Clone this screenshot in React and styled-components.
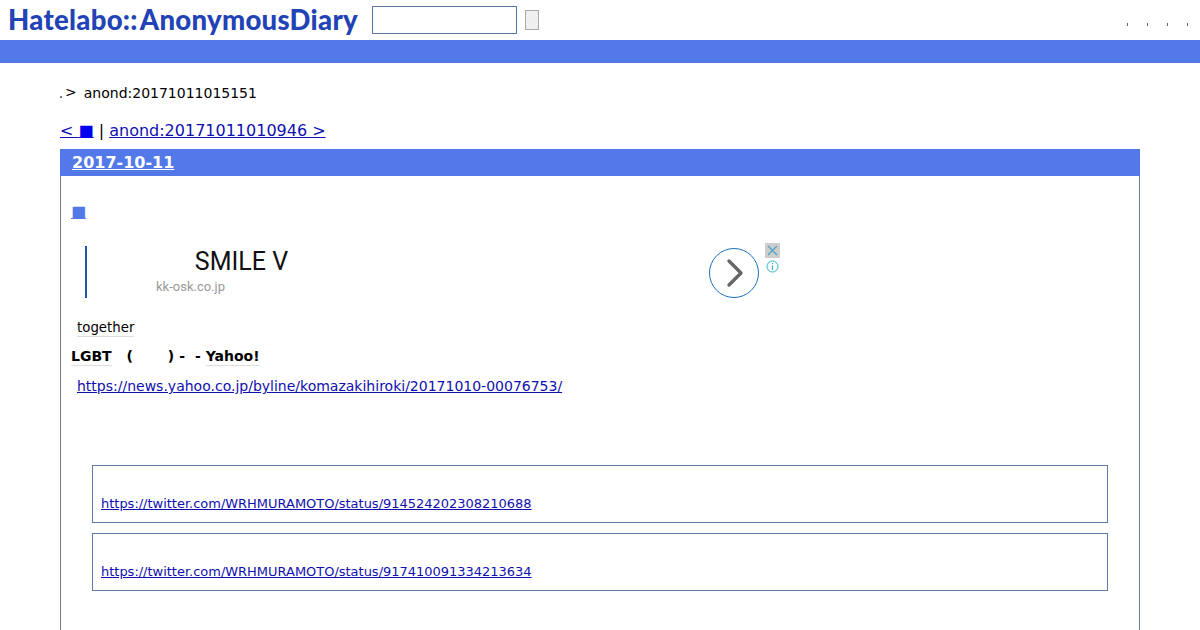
import React from "react";
import styled, { createGlobalStyle } from "styled-components";

const GlobalStyle = createGlobalStyle`
  html, body {
    margin: 0;
    padding: 0;
    height: 630px;
    overflow: hidden;
    background: #fff;
    font-family: "DejaVu Sans", sans-serif;
    color: #000;
  }
  a { color: #0f0fb0; }
`;

const Header = styled.header`
  display: flex;
  align-items: center;
  height: 40px;
  padding-left: 8px;
`;

const Logo = styled.a`
  width: 351px;
  font-family: "Lato", sans-serif;
  font-weight: 900;
  font-size: 27.5px;
  line-height: 40px;
  letter-spacing: 0.3px;
  white-space: nowrap;
  color: #2243b6;
  text-decoration: none;
`;

const LogoTail = styled.span`
  margin-left: 2px;
`;

const SearchInput = styled.input`
  box-sizing: border-box;
  width: 145px;
  height: 28px;
  margin-left: 13px;
  border: 1px solid #5b77a5;
  background: #fff;
  padding: 0;
`;

const SearchButton = styled.button`
  box-sizing: border-box;
  width: 14px;
  height: 20px;
  margin-left: 8px;
  padding: 0;
  border: 1px solid #aaa;
  background: #efefef;
`;

const HeaderLinks = styled.nav`
  display: flex;
  gap: 19px;
  margin-left: auto;
  padding-right: 12px;
  padding-top: 9px;
`;

const Tick = styled.span`
  width: 1px;
  height: 3px;
  background: #666;
`;

const Band = styled.div`
  height: 23px;
  background: #5279e7;
`;

const Main = styled.main`
  padding: 0 60px;
`;

const Crumbs = styled.div`
  display: flex;
  align-items: center;
  height: 20px;
  margin-top: 20px;
  font-size: 14px;
  line-height: 20px;
`;

const CrumbDot = styled.span`
  width: 2px;
  height: 2px;
  margin-top: 8px;
  background: #777;
`;

const CrumbArrow = styled.span`
  margin: -2px 0 0 3px;
`;

const CrumbTitle = styled.span`
  margin-left: 7px;
`;

const Pager = styled.div`
  margin-top: 18px;
  height: 19px;
  font-size: 16px;
  line-height: 19px;
  white-space: pre;
`;

const PagerMark = styled.span`
  color: #0000ee;
`;

const Section = styled.section`
  box-sizing: border-box;
  height: 481px;
  margin-top: 9px;
  border-left: 1px solid #6d7f9e;
  border-right: 1px solid #6d7f9e;
`;

const DateBar = styled.h2`
  margin: 0 -1px;
  height: 27px;
  padding-left: 12px;
  background: #5279e7;
  font-size: 16px;
  line-height: 27px;
  font-weight: 700;
  a { color: #fff; }
`;

const Marker = styled.a`
  display: inline-block;
  margin: 26px 0 0 10px;
  height: 20px;
  font-size: 16px;
  line-height: 20px;
  color: #5279e7;
`;

const Ad = styled.div`
  position: relative;
  display: flex;
  box-sizing: border-box;
  width: 695px;
  height: 52px;
  margin: 24px 0 0 24px;
  border-left: 2px solid #1c58a4;
  font-family: Roboto, sans-serif;
`;

const AdText = styled.div`
  width: 622px;
  padding-left: 69px;
  box-sizing: border-box;
`;

const AdTitle = styled.div`
  width: 171px;
  text-align: center;
  font-size: 25px;
  line-height: 32px;
  color: #111;
  white-space: nowrap;
`;

const AdDomain = styled.div`
  font-size: 13px;
  line-height: 16px;
  margin-top: 1px;
  color: #999;
`;

const AdArrow = styled.div`
  display: flex;
  align-items: center;
  justify-content: center;
  width: 50px;
  height: 50px;
  margin-top: 2px;
  box-sizing: border-box;
  border: 1px solid #1a6fc0;
  border-radius: 50%;
`;

const AdClose = styled.div`
  position: absolute;
  top: -3px;
  right: 0;
  display: flex;
  width: 15px;
  height: 15px;
  background: #cdcdcd;
`;

const AdInfo = styled.div`
  position: absolute;
  top: 14px;
  right: 1px;
  display: flex;
`;

const Tag = styled.div`
  margin-top: 20px;
  height: 18px;
  padding-left: 16px;
  font-size: 13.33px;
  line-height: 18px;
`;

const TagText = styled.span`
  display: inline-block;
  padding-top: 1px;
  line-height: 17px;
  border-bottom: 1px solid #ddd;
`;

const Dotted = styled.span`
  display: inline-block;
  border-bottom: 1px solid #ddd;
`;

const Title = styled.div`
  margin-top: 11px;
  height: 18px;
  padding-left: 10px;
  font-size: 14px;
  line-height: 18px;
  font-weight: 700;
  white-space: pre;
  word-spacing: 0.1px;
`;

const SourceLink = styled.div`
  margin-top: 12px;
  height: 18px;
  padding-left: 16px;
  font-size: 14px;
  line-height: 18px;
`;

const Quote = styled.blockquote`
  box-sizing: border-box;
  height: 58px;
  margin: ${(p) => p.$top}px 31px 0 31px;
  padding: 29px 8px 0;
  border: 1px solid #5f7ba8;
  font-size: 12.98px;
  line-height: 18px;
`;

const quotes = [
  { top: 70, url: "https://twitter.com/WRHMURAMOTO/status/914524202308210688" },
  { top: 10, url: "https://twitter.com/WRHMURAMOTO/status/917410091334213634" },
];

export default function App() {
  return (
    <>
      <GlobalStyle />
      <Header>
        <Logo href="#">
          Hatelabo::<LogoTail>AnonymousDiary</LogoTail>
        </Logo>
        <SearchInput type="text" />
        <SearchButton type="button" />
        <HeaderLinks>
          <Tick />
          <Tick />
          <Tick />
          <Tick />
        </HeaderLinks>
      </Header>
      <Band />
      <Main>
        <Crumbs>
          <CrumbDot />
          <CrumbArrow>&gt;</CrumbArrow>
          <CrumbTitle>anond:20171011015151</CrumbTitle>
        </Crumbs>
        <Pager>
          <a href="#">&lt; <PagerMark>■</PagerMark></a> | <a href="#">anond:20171011010946 &gt;</a>
        </Pager>
        <Section>
          <DateBar>
            <a href="#">2017-10-11</a>
          </DateBar>
          <Marker href="#">■</Marker>
          <Ad>
            <AdText>
              <AdTitle>SMILE V</AdTitle>
              <AdDomain>kk-osk.co.jp</AdDomain>
            </AdText>
            <AdArrow>
              <svg width="24" height="30" viewBox="0 0 24 30" fill="none">
                <path d="M7 3 L19 15 L7 27" stroke="#666" strokeWidth="3.4" strokeLinecap="round" strokeLinejoin="round" />
              </svg>
            </AdArrow>
            <AdClose>
              <svg width="15" height="15" viewBox="0 0 15 15" fill="none">
                <path d="M3 3 L12 12 M12 3 L3 12" stroke="#4aa3c4" strokeWidth="1.2" />
              </svg>
            </AdClose>
            <AdInfo>
              <svg width="13" height="13" viewBox="0 0 13 13" fill="none">
                <circle cx="6.5" cy="6.5" r="5.5" stroke="#2fb5c4" strokeWidth="1" />
                <path d="M6.5 5.5 V10 M6.5 3 V4.2" stroke="#2fb5c4" strokeWidth="1.2" />
              </svg>
            </AdInfo>
          </Ad>
          <Tag>
            <TagText>together</TagText>
          </Tag>
          <Title>
            <Dotted>LGBT</Dotted>
            {"   (       ) -  - "}
            <Dotted>Yahoo!</Dotted>
          </Title>
          <SourceLink>
            <a href="#">https://news.yahoo.co.jp/byline/komazakihiroki/20171010-00076753/</a>
          </SourceLink>
          {quotes.map((q) => (
            <Quote key={q.url} $top={q.top}>
              <a href="#">{q.url}</a>
            </Quote>
          ))}
        </Section>
      </Main>
    </>
  );
}
